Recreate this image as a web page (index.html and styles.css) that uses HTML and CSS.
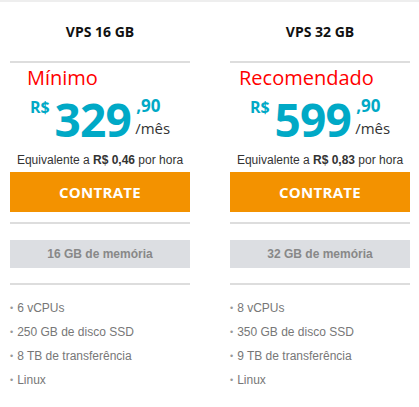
FILE: index.html
```html
<!DOCTYPE html>
<html lang="pt-BR">
<head>
<meta charset="utf-8">
<link rel="stylesheet" href="styles.css">
</head>
<body>
<div class="plans">
  <div class="plan">
    <h2 class="title">VPS 16 GB</h2>
    <div class="sep"></div>
    <div class="tag tag-min">Mínimo</div>
    <div class="price">
      <span class="cur">R$</span>
      <span class="amount">329</span>
      <span class="tail"><span class="dec">,90</span><span class="per">/mês</span></span>
    </div>
    <p class="hour">Equivalente a <b>R$ 0,46</b> por hora</p>
    <a class="btn">CONTRATE</a>
    <div class="sep sep-mid"></div>
    <div class="mem">16 GB de memória</div>
    <div class="sep sep-low"></div>
    <ul class="feats">
      <li>6 vCPUs</li>
      <li>250 GB de disco SSD</li>
      <li>8 TB de transferência</li>
      <li>Linux</li>
    </ul>
  </div>
  <div class="plan">
    <h2 class="title">VPS 32 GB</h2>
    <div class="sep"></div>
    <div class="tag tag-rec">Recomendado</div>
    <div class="price">
      <span class="cur">R$</span>
      <span class="amount">599</span>
      <span class="tail"><span class="dec">,90</span><span class="per">/mês</span></span>
    </div>
    <p class="hour">Equivalente a <b>R$ 0,83</b> por hora</p>
    <a class="btn">CONTRATE</a>
    <div class="sep sep-mid"></div>
    <div class="mem">32 GB de memória</div>
    <div class="sep sep-low"></div>
    <ul class="feats">
      <li>8 vCPUs</li>
      <li>350 GB de disco SSD</li>
      <li>9 TB de transferência</li>
      <li>Linux</li>
    </ul>
  </div>
</div>
</body>
</html>
```
FILE: styles.css
```css
html, body {
  margin: 0;
  padding: 0;
  background: #fff;
}
body {
  border-top: 2px solid #eeeeee;
  font-family: "Open Sans", sans-serif;
}
.plans {
  display: grid;
  grid-template-columns: 180px 180px;
  column-gap: 40px;
  padding: 0 10px;
}
.plan {
  display: flex;
  flex-direction: column;
}
.title {
  margin: 0;
  height: 59px;
  display: flex;
  align-items: center;
  justify-content: center;
  font-size: 14px;
  font-weight: 700;
  color: #111;
}
.sep {
  height: 2px;
  background: #dddddd;
}
.tag {
  color: #ff0000;
  font-size: 20px;
  line-height: 28px;
  margin-top: 1px;
}
.tag-min { padding-left: 17px; }
.tag-rec { padding-left: 9px; }
.price {
  display: flex;
  justify-content: center;
  align-items: flex-start;
  color: #00a9c6;
  margin-top: 4px;
  height: 50px;
}
.cur {
  font-weight: 700;
  font-size: 16px;
  line-height: 18px;
  margin-top: 2px;
  margin-right: 5px;
}
.amount {
  font-weight: 700;
  font-size: 46px;
  line-height: 46px;
  letter-spacing: -0.8px;
}
.tail {
  display: flex;
  flex-direction: column;
  margin-left: 5px;
}
.dec {
  font-weight: 700;
  font-size: 17px;
  line-height: 20px;
}
.per {
  color: #333;
  font-size: 15px;
  line-height: 18px;
  margin-top: 3px;
  margin-left: -1px;
}
.hour {
  margin: 6px 0 0;
  text-align: center;
  font-family: "Liberation Sans", Arial, sans-serif;
  font-size: 12px;
  line-height: 16px;
  color: #333;
}
.hour b { font-weight: 700; }
.btn {
  display: block;
  margin-top: 4px;
  height: 40px;
  line-height: 40px;
  background: #f39200;
  color: #fff;
  text-align: center;
  font-weight: 700;
  font-size: 15px;
  letter-spacing: 0.3px;
}
.sep-mid { margin-top: 10px; }
.mem {
  margin-top: 16px;
  height: 28px;
  line-height: 28px;
  background: #dcdee2;
  color: #888;
  text-align: center;
  font-family: "Liberation Sans", Arial, sans-serif;
  font-weight: 700;
  font-size: 12px;
}
.sep-low { margin-top: 15px; }
.feats {
  list-style: none;
  margin: 11px 0 0;
  padding: 0;
  font-family: "Liberation Sans", Arial, sans-serif;
  font-size: 12px;
  color: #777;
}
.feats li {
  line-height: 24px;
}
.feats li::before {
  content: "•";
  color: #999;
  font-size: 9px;
  margin-right: 4px;
  vertical-align: 1px;
}
```
